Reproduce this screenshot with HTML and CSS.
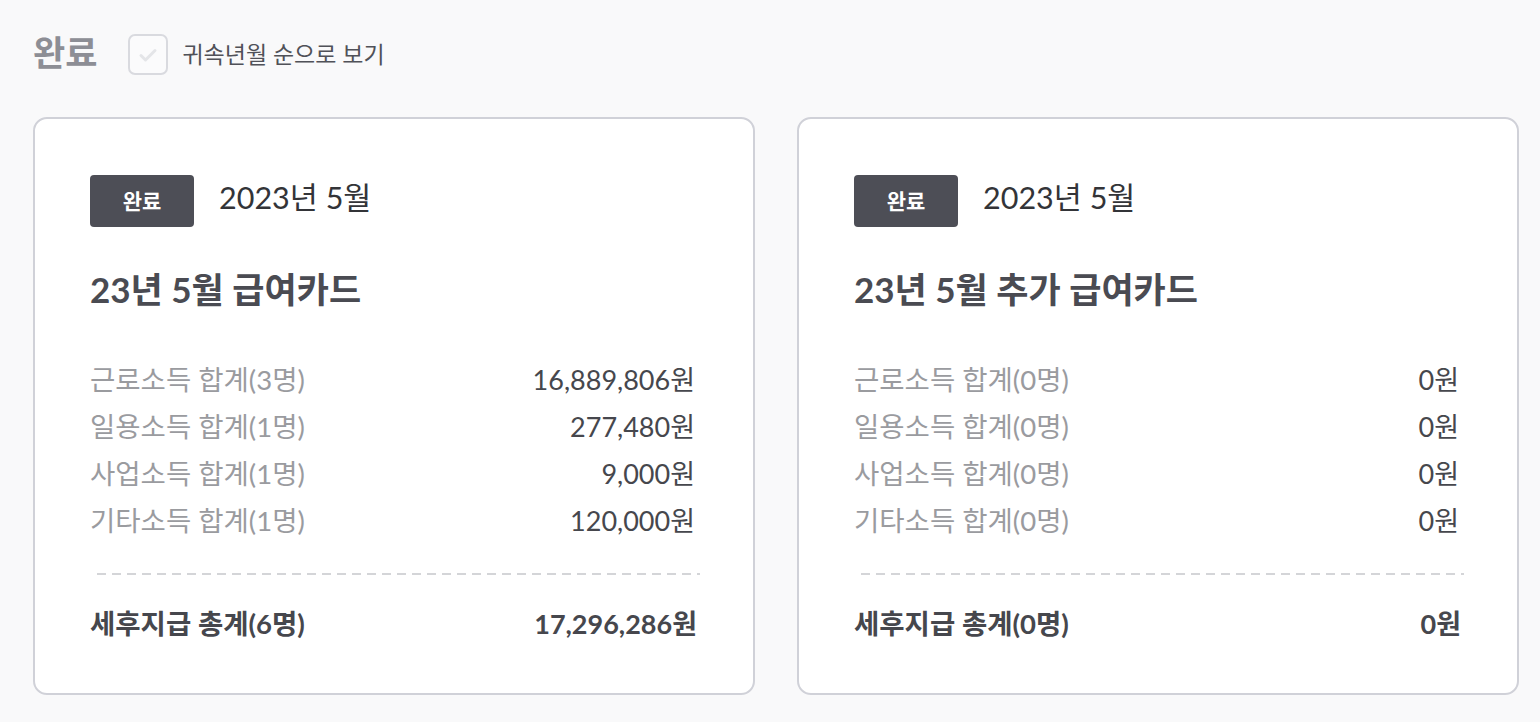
FILE: index.html
```html
<!DOCTYPE html>
<html lang="ko">
<head>
<meta charset="utf-8">
<title>완료</title>
<link rel="stylesheet" href="styles.css">
</head>
<body>
<div class="page">
  <div class="header">
    <h2 class="heading">완료</h2>
    <span class="checkbox">
      <svg width="24" height="24" viewBox="0 0 24 24"><path d="M5 12.5l4.5 4.5L19 7.5" fill="none" stroke="#e4e5e8" stroke-width="3" stroke-linecap="round" stroke-linejoin="round"/></svg>
    </span>
    <span class="check-label">귀속년월 순으로 보기</span>
  </div>
  <div class="cards">
    <div class="card">
      <div class="card-top">
        <span class="badge">완료</span>
        <span class="date">2023년 5월</span>
      </div>
      <div class="title">23년 5월 급여카드</div>
      <div class="rows">
        <div class="row"><span class="label">근로소득 합계(3명)</span><span class="value">16,889,806원</span></div>
        <div class="row"><span class="label">일용소득 합계(1명)</span><span class="value">277,480원</span></div>
        <div class="row"><span class="label">사업소득 합계(1명)</span><span class="value">9,000원</span></div>
        <div class="row"><span class="label">기타소득 합계(1명)</span><span class="value">120,000원</span></div>
      </div>
      <div class="dash"></div>
      <div class="row total"><span>세후지급 총계(6명)</span><span class="total-value">17,296,286원</span></div>
    </div>
    <div class="card">
      <div class="card-top">
        <span class="badge">완료</span>
        <span class="date">2023년 5월</span>
      </div>
      <div class="title">23년 5월 추가 급여카드</div>
      <div class="rows">
        <div class="row"><span class="label">근로소득 합계(0명)</span><span class="value">0원</span></div>
        <div class="row"><span class="label">일용소득 합계(0명)</span><span class="value">0원</span></div>
        <div class="row"><span class="label">사업소득 합계(0명)</span><span class="value">0원</span></div>
        <div class="row"><span class="label">기타소득 합계(0명)</span><span class="value">0원</span></div>
      </div>
      <div class="dash"></div>
      <div class="row total"><span>세후지급 총계(0명)</span><span class="total-value">0원</span></div>
    </div>
  </div>
</div>
</body>
</html>
```

FILE: styles.css
```css
* { box-sizing: border-box; }
html, body {
  margin: 0;
  padding: 0;
  background: #f9f9fa;
  font-family: Lato, "Noto Sans CJK KR", sans-serif;
}
.page {
  padding: 34px 21px 0 33px;
}
.header {
  display: flex;
  align-items: center;
  height: 41px;
}
.heading {
  margin: -4px 31px 0 0;
  font-size: 35px;
  font-weight: 700;
  color: #8d8e95;
  line-height: 41px;
}
.checkbox {
  width: 40px;
  height: 41px;
  border: 2px solid #d9dadf;
  border-radius: 7px;
  background: #fbfbfc;
  display: flex;
  align-items: center;
  justify-content: center;
  margin-right: 14px;
}
.check-label {
  font-size: 23px;
  color: #505158;
  margin-top: -3px;
}
.cards {
  display: grid;
  grid-template-columns: 1fr 1fr;
  gap: 42px;
  margin-top: 42px;
}
.card {
  background: #fff;
  border: 2px solid #d0d1d8;
  border-radius: 14px;
  height: 578px;
  padding: 55px 58px 0 55px;
}
.card-top {
  display: flex;
  align-items: center;
}
.badge {
  width: 104px;
  height: 52px;
  border-radius: 4px;
  background: #4d4e56;
  color: #fff;
  font-weight: 700;
  font-size: 21px;
  display: flex;
  align-items: center;
  justify-content: center;
  margin-right: 25px;
  padding-bottom: 2px;
}
.date {
  font-size: 30.5px;
  color: #333438;
  margin-bottom: 9px;
}
.title {
  margin-top: 42px;
  font-size: 35px;
  line-height: 40px;
  font-weight: 700;
  color: #4a4b52;
}
.rows {
  margin-top: 47px;
}
.row {
  display: flex;
  justify-content: space-between;
  align-items: baseline;
  font-size: 27.5px;
  line-height: 47px;
}
.label { color: #9a9b9f; }
.value { color: #46474d; font-size: 27px; }
.dash {
  margin: 29px -5px 0 7px;
  height: 2px;
  background: repeating-linear-gradient(to right, #d4d5d8 0 9px, transparent 9px 15px);
}
.total {
  margin-top: 25px;
  font-weight: 700;
  color: #46474d;
}
.total-value { font-size: 27px; margin-right: -2px; }
```
